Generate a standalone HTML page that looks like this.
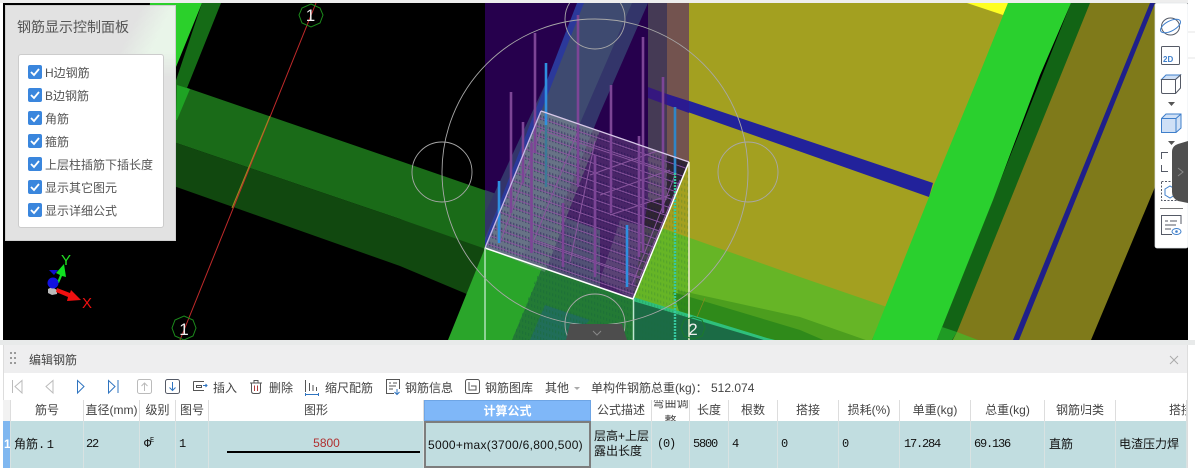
<!DOCTYPE html>
<html><head><meta charset="utf-8">
<style>
html,body{margin:0;padding:0;width:1195px;height:468px;overflow:hidden;background:#fff}
body{position:relative;font-family:"Liberation Sans","Noto Sans CJK SC",sans-serif;font-size:12px;color:#333}
svg{position:absolute;left:0;top:0}
.t{position:absolute;white-space:nowrap;line-height:16px}
.panel{position:absolute;left:5px;top:5px;width:171px;height:236px;box-sizing:border-box;background:#e2e2e2;border:1px solid #cfcfcf;overflow:hidden}
.glow{position:absolute;left:105px;top:0;width:66px;height:72px;background:linear-gradient(116deg,rgba(233,245,233,0) 30%,#e9f5e9 62%);-webkit-mask-image:linear-gradient(#000 62%,transparent);mask-image:linear-gradient(#000 62%,transparent)}
.inner{position:absolute;left:12px;top:48px;width:146px;height:174px;box-sizing:border-box;background:#fff;border:1px solid #ccc;border-radius:3px}
.cb{position:absolute;left:23px;width:14px;height:14px;background:#3a86dd;border-radius:2px}
.lab{position:absolute;left:39px;color:#555;font-size:12px;line-height:16px;white-space:nowrap}
.h{position:absolute;top:400px;height:21px;line-height:21px;text-align:center;color:#444;background:#fff;border-right:1px solid #ddd;box-sizing:border-box;font-size:12px;overflow:hidden;white-space:nowrap}
.c{position:absolute;top:421px;height:47px;line-height:47px;background:#c1dde0;border-right:1px solid #d8e2e2;box-sizing:border-box;padding-left:4px;color:#111;white-space:nowrap;overflow:hidden;font-size:12px}
.m{font-family:"Liberation Mono",monospace;font-size:12px;letter-spacing:-1.2px}
</style></head><body>
<svg width="1195" height="468" viewBox="0 0 1195 468">
<defs>
<clipPath id="v"><rect x="3" y="3" width="1185" height="337"/></clipPath>
<clipPath id="top"><polygon points="541,111 689,162 633,299 485,248"/></clipPath>
<clipPath id="col"><polygon points="485,3 689,3 689,162 633,299 485,248"/></clipPath>
<pattern id="st" patternUnits="userSpaceOnUse" width="40" height="9" patternTransform="skewY(19)">
<line x1="0" y1="4" x2="40" y2="4" stroke="#8a569f" stroke-width="1"/>
</pattern>
<pattern id="dots" patternUnits="userSpaceOnUse" width="3" height="9" patternTransform="skewY(19)">
<rect x="0" y="1" width="1.4" height="5" fill="#1f1050" opacity=".42"/>
</pattern>
<pattern id="gd" patternUnits="userSpaceOnUse" width="3" height="6" patternTransform="skewY(19)">
<rect x="0" y="1" width="1.3" height="3" fill="#1a6a3a" opacity=".5"/>
</pattern>
</defs>
<rect width="1195" height="468" fill="#fff"/>
<rect x="0" y="0" width="1195" height="3" fill="#eee"/>
<rect x="0" y="340" width="1195" height="5" fill="#e8eaea"/>
<g clip-path="url(#v)">
<rect x="3" y="3" width="1185" height="337" fill="#000"/>
<!-- top-left green -->
<polygon points="150,3 202,3 176,67 176,120 140,120" fill="#2bd02b"/>
<polygon points="202,3 221,3 177,113 165,113" fill="#156b16"/>
<!-- green beam -->
<polygon points="100,58 400,161 600,230 600,300 400,219 100,117" fill="#1a6b18"/>
<polygon points="100,117 400,219 600,289 600,350 400,266 100,160" fill="#11480f"/>
<polygon points="177,85 190,89 177,120 176,120" fill="#1fa324"/>
<!-- olive main -->
<polygon points="689,3 1010,3 872,340 633,340 633,299 689,162" fill="#a3a020"/>
<polygon points="967,3 1008,3 1003,15" fill="#ffff22"/>
<!-- blue beam -->
<polygon points="648,87 933,183 929,197 648,98" fill="#22229b"/>
<!-- light green beam -->
<polygon points="662,228 800,277 887,307 872,340 633,340 633,299" fill="#66b526"/>
<polygon points="677,290 800,317 880,345 700,345" fill="#4c9e1e"/>
<polygon points="673,292 800,330 835,345 690,345" fill="#2f8a1a"/>
<polygon points="633,299 767,340 633,340" fill="#1b6b45"/>
<polygon points="633,297 767,338 775,340 767,341 633,301" fill="#2fc07c"/>
<!-- right bands -->
<polygon points="1084,3 1155,3 1155,187 1091,340 950,340" fill="#7f7a1a"/>
<polygon points="1071,3 1090,3 957,332 950,345 935,345" fill="#126415"/>
<polygon points="1008,3 1071,3 1040,75 993,200 937,340 872,340 933,187 975,85" fill="#2ad02e"/>
<polygon points="942,327 957,332 952,340 937,340" fill="#1f9b24"/>
<polygon points="957,332 978,340 953,340" fill="#54a824"/>
<polygon points="1150,3 1155,3 1019,340 1013,340" fill="#1f1f8a"/>
<!-- slanted column under -->
<polygon points="485,248 633,299 633,340 448,340" fill="#2aa52a"/>
<polygon points="542,268 633,299 633,340 512,340" fill="#237a35"/>
<polygon points="545,305 590,320 570,340 530,340" fill="#1f6a6a" opacity=".7"/>
<polygon points="540,268 633,299 633,340 512,340" fill="url(#gd)"/>
<polygon points="633,299 689,162 689,340 633,340" fill="url(#gd)" opacity=".4"/>
<!-- purple column -->
<polygon points="485,3 648,3 648,200 633,299 485,248" fill="#2a0055" opacity=".9"/>
<polygon points="485,190 600,230 600,288 485,248" fill="#33405f"/>
<polygon points="648,3 667,3 667,200 648,200" fill="#453a55"/>
<polygon points="667,3 689,3 689,162 667,155" fill="#73534f"/>
<polygon points="648,87 667,94 667,105 648,98" fill="#35177f"/>
<polygon points="667,94 689,101 689,113 667,105" fill="#2b1a90"/>
<!-- slanted strip over the column -->
<g clip-path="url(#col)">
<polygon points="583,3 648,3 600,113 520,310 440,310" fill="#33356a"/>
<polygon points="583,3 632,3 520,262 480,250" fill="#3e4a70"/>
<polygon points="577,3 584,3 487,248 484,243" fill="#2b399a"/>
</g>
<!-- cube top translucent -->
<polygon points="541,111 689,162 633,299 485,248" fill="#9a7aaa" opacity=".3"/>
<polygon points="541,111 600,131 545,272 485,248" fill="#78958c" opacity=".45"/>
<polygon points="600,280 633,299 660,230 620,220" fill="#7a7a90" opacity=".35"/>
<g clip-path="url(#top)">
<rect x="480" y="105" width="215" height="200" fill="url(#dots)"/>
<rect x="480" y="105" width="215" height="200" fill="url(#st)"/>
<polyline points="578,131 534,240 640,277 680,180" fill="none" stroke="#8a569f"/>
<polyline points="500,243 541,130 675,175 632,285 Z" fill="none" stroke="#8a569f"/>
<polyline points="595,141 570,262" fill="none" stroke="#8a569f"/>
<path d="M590,175 660,150 M600,195 670,170 M610,215 670,195" fill="none" stroke="#8a569f"/>
</g>
<!-- rebars -->
<g stroke="#7c4596" stroke-width="2.6">
<line x1="535" y1="33" x2="535" y2="153"/>
<line x1="511" y1="92" x2="511" y2="213"/>
<line x1="523" y1="122" x2="523" y2="183"/>
<line x1="531.5" y1="143" x2="531.5" y2="253"/>
<line x1="563" y1="203" x2="563" y2="267"/>
<line x1="595" y1="155" x2="595" y2="277"/>
<line x1="611" y1="85" x2="611" y2="213"/>
<line x1="643" y1="37" x2="643" y2="253"/>
<line x1="639" y1="136" x2="639" y2="257"/>
<line x1="663" y1="77" x2="663" y2="213"/>
<line x1="578" y1="15" x2="578" y2="187"/>
</g>
<!-- blue bars -->
<g stroke="#2f8fe0" stroke-width="2.6">
<line x1="546" y1="63" x2="546" y2="125"/>
<line x1="499" y1="181" x2="499" y2="243"/>
<line x1="627" y1="225" x2="627" y2="287"/>
<line x1="675" y1="107" x2="675" y2="173" stroke="#2f85c8"/>
</g>
<line x1="546" y1="125" x2="546" y2="187" stroke="#3c7a96" stroke-width="2.4"/>
<line x1="675" y1="173" x2="675" y2="340" stroke="#36c9a0" stroke-width="2.4" stroke-dasharray="2 1"/>
<!-- wire cube -->
<polyline points="541,111 689,162" stroke="#d8c8e8" stroke-width="1.3" fill="none"/>
<polyline points="541,111 485,248" stroke="#c8b8e8" stroke-width="1.3" fill="none"/>
<polyline points="485,248 633,299 689,162" stroke="#fff" stroke-width="1.5" fill="none"/>
<line x1="485" y1="248" x2="485" y2="340" stroke="#b0e0b8" stroke-width="1.5"/>
<line x1="633.5" y1="299" x2="633.5" y2="340" stroke="#bfe8d0" stroke-width="1.5"/>
<line x1="689" y1="162" x2="689" y2="340" stroke="#f2f2d0" stroke-width="1.5"/>
<!-- circles -->
<g fill="none" stroke="#a8a8a8" stroke-width=".9">
<circle cx="595" cy="172" r="153"/>
<circle cx="442" cy="172" r="30"/>
<circle cx="748" cy="172" r="30"/>
<circle cx="595" cy="19" r="30"/>
<circle cx="595" cy="324" r="30"/>
</g>
<!-- axis lines -->
<line x1="316" y1="3" x2="180" y2="340" stroke="#c02a2a" stroke-width="1"/>
<line x1="270" y1="116" x2="232" y2="208" stroke="#a08a20" stroke-width="1"/>
<polygon points="311,4 320,8 323,15 320,23 311,27 302,23 299,15 302,8" fill="none" stroke="#1c8a1c"/>
<polygon points="184,316 193,320 196,328 193,336 184,340 175,336 172,328 175,320" fill="none" stroke="#1c8a1c"/>
<polygon points="693,317 702,320 705,328 702,336 693,339 684,336 681,328 684,320" fill="none" stroke="#1b7a2a"/>
<line x1="705" y1="298" x2="697" y2="317" stroke="#8a8a20" stroke-width=".7"/>
<text x="310.5" y="21" text-anchor="middle" font-size="17" fill="#eee" font-family="Liberation Sans">1</text>
<text x="184" y="335" text-anchor="middle" font-size="17" fill="#eee" font-family="Liberation Sans">1</text>
<text x="693" y="335" text-anchor="middle" font-size="17" fill="#eee" font-family="Liberation Sans">2</text>
<!-- gizmo -->
<polygon points="48,289 52,287 57,290 57,294 52,295 48,293" fill="#bbb"/>
<polygon points="57,288 70,293 71,290 81,300 67,301 68,297 56,292" fill="#f01010"/>
<polygon points="52,278 58,280 60,275 56,273 64,264 66,277 62,276 59,283" fill="#10e020"/>
<polygon points="49,270 58,270 54,275" fill="#1010d0"/>
<circle cx="53" cy="283" r="5.500" fill="#1212e0"/>
<text x="61" y="265" font-size="15" fill="#22e022" font-family="Liberation Sans">Y</text>
<text x="82" y="308" font-size="15" fill="#f01010" font-family="Liberation Sans">X</text>
<!-- bottom collapse -->
<polygon points="570,324 622,324 627,340 566,340" fill="#4d4d4d"/>
<polyline points="593,331 597,335 601,331" fill="none" stroke="#888"/>
</g>
<!-- right toolbar -->
<rect x="1155" y="3" width="33" height="245" rx="2" fill="#fff" stroke="#e2e6ea" stroke-width=".7"/>
<rect x="1188" y="0" width="7" height="340" fill="#fff"/>
<line x1="1188" y1="32" x2="1195" y2="32" stroke="#e4e4e4"/>
<line x1="1188" y1="58" x2="1195" y2="58" stroke="#e4e4e4"/>
<g fill="none" stroke-width="1">
<ellipse cx="1170.5" cy="26.500" rx="9" ry="8.500" stroke="#555a66"/>
<ellipse cx="1170.5" cy="26" rx="11" ry="5" transform="rotate(-28 1170.5 26)" stroke="#3f7fcb"/>
<rect x="1161.5" y="46.500" width="18" height="18" rx="1" stroke="#555a66"/>
<polygon points="1161.5,79.5 1166,75 1180.5,75 1175.5,79.5" fill="#cfe0f6" stroke="#3f7fcb"/>
<path d="M1161.5 79.5H1175.5V93.5H1163a1.5 1.5 0 0 1-1.5-1.5ZM1175.5 79.5L1180.5 75V88L1175.5 93.5" stroke="#555a66"/>
<path d="M1161.5 118.5L1166 114H1181V128L1176 132.5H1161.5Z" fill="#cfe0f6" stroke="#3f7fcb"/>
<path d="M1161.5 118.5H1176V132.5M1176 118.5L1181 114" stroke="#3f7fcb"/>
<path d="M1168 152.5H1161.5V159M1161.5 165V171.5H1168" stroke="#555a66"/>
<rect x="1161.5" y="181.5" width="19" height="19" stroke="#555a66" stroke-dasharray="2 1.5"/>
<path d="M1165 189L1170 186 1175 189V195L1170 198 1165 195Z" stroke="#3f7fcb"/>
<line x1="1160" y1="208.5" x2="1183" y2="208.5" stroke="#777"/>
<path d="M1181 224V215.5H1161.5V234.5H1172" stroke="#555a66"/>
<path d="M1165 221H1168M1170 221H1177M1165 225H1176M1165 229H1171" stroke="#555a66"/>
<ellipse cx="1176.5" cy="231.5" rx="4.5" ry="3" stroke="#3f7fcb"/>
</g>
<text x="1163" y="62" font-size="8" font-weight="bold" fill="#3f7fcb" font-family="Liberation Sans">2D</text>
<circle cx="1176.5" cy="231.5" r="1.3" fill="#3f7fcb"/>
<polygon points="1168,102 1175,102 1171.5,106" fill="#555"/>
<polygon points="1168,141 1175,141 1171.5,145" fill="#555"/>
<path d="M1188 141V203L1178 201Q1172 198 1172 192V152Q1172 146 1178 144Z" fill="#4f4f4f"/>
<polyline points="1178,168 1183,172 1178,176" fill="none" stroke="#888"/>
<!-- bottom panel -->
<rect x="3" y="345" width="1185" height="28" fill="#eeeeef"/>
<rect x="3" y="373" width="1185" height="27" fill="#fff"/>
<rect x="3" y="345" width="1" height="123" fill="#ddd"/>
<rect x="1187" y="345" width="1" height="123" fill="#ddd"/>
<g fill="#9a9a9a">
<rect x="10" y="352" width="2" height="2"/><rect x="14" y="352" width="2" height="2"/>
<rect x="10" y="357" width="2" height="2"/><rect x="14" y="357" width="2" height="2"/>
<rect x="10" y="362" width="2" height="2"/><rect x="14" y="362" width="2" height="2"/>
</g>
<path d="M1170 356L1178 364M1178 356L1170 364" stroke="#aaa" fill="none"/>
<!-- toolbar icons -->
<g fill="none" stroke-width="1">
<path d="M12.5 380V393" stroke="#bbb"/><path d="M22 380.500V393L15 386.500Z" stroke="#bbb"/>
<path d="M53 380.500V393L46 386.500Z" stroke="#bbb"/>
<path d="M77.500 380.500V393L84 386.500Z" stroke="#2f74c0"/>
<path d="M108.500 380.500V393L115 386.500Z" stroke="#2f74c0"/><path d="M118 380V393" stroke="#2f74c0"/>
<rect x="137.500" y="379.500" width="14" height="14" rx="2" stroke="#bbb"/>
<path d="M144.500 383V391M141.500 386L144.500 383 147.500 386" stroke="#bbb"/>
<rect x="165.500" y="379.500" width="14" height="14" rx="2" stroke="#555a66"/>
<path d="M172.500 382V390M169.500 387.500L172.500 390.500 175.500 387.500" stroke="#2f74c0"/>
<path d="M193.500 381.500H204M193.500 381.500V390.500H204M196.500 385.500H201.500V387.500H196.500Z" stroke="#555"/>
<path d="M203 385.500H207M205.500 384L207 385.500 205.500 387" stroke="#2f74c0"/>
<path d="M250 383H262M254 383V380.500H258V383M251.500 383V391Q251.500 393.500 254 393.500H258Q260.500 393.500 260.500 391V383" stroke="#555"/>
<path d="M254.500 385.500V391M257.500 385.500V391" stroke="#b43a3a"/>
<path d="M305.500 380V392M309.500 383V391M313 385V391M316.500 387V391" stroke="#555"/>
<path d="M305 394.500H319M305.500 393V396M318.500 393V396" stroke="#2f74c0"/>
<path d="M399.500 389V379.500H386.500V393.500H394" stroke="#555"/>
<path d="M389 383H391M393 383H397M389 386H396M389 389H393" stroke="#555"/>
<path d="M397 389V394M394.500 392L397 394.500 399.500 392" stroke="#2f74c0"/>
<rect x="465.500" y="379.500" width="14" height="14" rx="2" stroke="#555"/>
<path d="M469 382V390H476V386H471" stroke="#555"/>
</g>
<polygon points="574,387 580,387 577,390" fill="#aaa"/>
</svg>

<div class="panel">
<div class="glow"></div>
<div class="t" style="left:11px;top:12px;font-size:14px;color:#555;line-height:18px">钢筋显示控制面板</div>
<div class="inner"></div>
</div>

<div class="cb" style="left:28px;top:65px"></div><div class="lab" style="left:45px;top:65px">H边钢筋</div>
<div class="cb" style="left:28px;top:88px"></div><div class="lab" style="left:45px;top:88px">B边钢筋</div>
<div class="cb" style="left:28px;top:111px"></div><div class="lab" style="left:45px;top:111px">角筋</div>
<div class="cb" style="left:28px;top:134px"></div><div class="lab" style="left:45px;top:134px">箍筋</div>
<div class="cb" style="left:28px;top:157px"></div><div class="lab" style="left:45px;top:157px">上层柱插筋下插长度</div>
<div class="cb" style="left:28px;top:180px"></div><div class="lab" style="left:45px;top:180px">显示其它图元</div>
<div class="cb" style="left:28px;top:203px"></div><div class="lab" style="left:45px;top:203px">显示详细公式</div>
<svg width="1195" height="468" style="pointer-events:none">
<g fill="none" stroke="#fff" stroke-width="1.8">
<polyline points="31,72 34,75 39,69"/><polyline points="31,95 34,98 39,92"/><polyline points="31,118 34,121 39,115"/><polyline points="31,141 34,144 39,138"/><polyline points="31,164 34,167 39,161"/><polyline points="31,187 34,190 39,184"/><polyline points="31,210 34,213 39,207"/>
</g></svg>

<div class="t" style="left:29px;top:352px;color:#444">编辑钢筋</div>
<div class="t" style="left:213px;top:380px;color:#444">插入</div>
<div class="t" style="left:269px;top:380px;color:#444">删除</div>
<div class="t" style="left:325px;top:380px;color:#444">缩尺配筋</div>
<div class="t" style="left:405px;top:380px;color:#444">钢筋信息</div>
<div class="t" style="left:485px;top:380px;color:#444">钢筋图库</div>
<div class="t" style="left:545px;top:380px;color:#444">其他</div>
<div class="t" style="left:591px;top:380px;color:#444">单构件钢筋总重(kg)：</div>
<div class="t" style="left:711px;top:380px;color:#444">512.074</div>

<div class="h" style="left:3px;width:8px;background:#f2f2f2"></div>
<div class="h" style="left:11px;width:73px">筋号</div>
<div class="h" style="left:84px;width:56px">直径(mm)</div>
<div class="h" style="left:140px;width:36px">级别</div>
<div class="h" style="left:176px;width:33px">图号</div>
<div class="h" style="left:209px;width:215px">图形</div>
<div class="h" style="left:424px;width:167px;background:#7fb7f8;color:#fff;font-weight:bold;border:1px solid #6ea5e5">计算公式</div>
<div class="h" style="left:591px;width:61px">公式描述</div>
<div class="h" style="left:652px;width:38px;line-height:18px;white-space:normal"><div style="margin-top:-6px">弯曲调整</div></div>
<div class="h" style="left:690px;width:39px">长度</div>
<div class="h" style="left:729px;width:49px">根数</div>
<div class="h" style="left:778px;width:61px">搭接</div>
<div class="h" style="left:839px;width:61px">损耗(%)</div>
<div class="h" style="left:900px;width:71px">单重(kg)</div>
<div class="h" style="left:971px;width:74px">总重(kg)</div>
<div class="h" style="left:1045px;width:71px">钢筋归类</div>
<div class="h" style="left:1116px;width:71px;text-align:left;padding-left:53px">搭接形式</div>

<div class="c" style="left:3px;width:8px;background:#7fb7f0;color:#fff;padding-left:1px;font-weight:bold">1</div>
<div class="c" style="left:11px;width:73px;padding-left:3px">角筋<span class="m" style="letter-spacing:1.5px">.1</span></div>
<div class="c m" style="left:84px;width:56px;padding-left:2px">22</div>
<div class="c m" style="left:140px;width:36px;padding-left:4px">Φ<sup style="font-size:7px;line-height:0">E</sup></div>
<div class="c m" style="left:176px;width:33px;padding-left:3px">1</div>
<div class="c" style="left:209px;width:215px;padding:0">
<div style="position:absolute;left:21px;right:0;top:15px;line-height:14px;text-align:center;color:#b03030;font-size:12px">5800</div>
<div style="position:absolute;left:18px;right:3px;top:30px;height:2px;background:#000"></div>
</div>
<div class="c" style="left:424px;width:167px;border:2px solid #7d7d7d;padding:0 0 0 2px;line-height:44px;font-size:12px;color:#111;letter-spacing:.3px">5000+max(3700/6,800,500)</div>
<div class="c" style="left:591px;width:61px;line-height:14.500px;padding:8px 0 0 3px;white-space:normal;font-size:12px">层高+上层露出长度</div>
<div class="c m" style="left:652px;width:38px;padding-left:5px">(0)</div>
<div class="c m" style="left:690px;width:39px;padding-left:3px">5800</div>
<div class="c m" style="left:729px;width:49px;padding-left:3px">4</div>
<div class="c m" style="left:778px;width:61px;padding-left:3px">0</div>
<div class="c m" style="left:839px;width:61px;padding-left:3px">0</div>
<div class="c m" style="left:900px;width:71px;padding-left:4px">17.284</div>
<div class="c m" style="left:971px;width:74px;padding-left:3px">69.136</div>
<div class="c" style="left:1045px;width:71px;padding-left:4px">直筋</div>
<div class="c" style="left:1116px;width:71px;padding-left:3px">电渣压力焊</div>
</body></html>
